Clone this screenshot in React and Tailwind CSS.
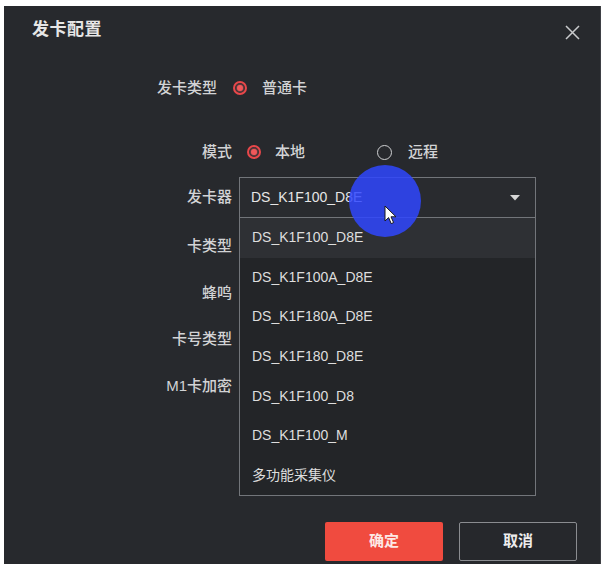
import { useState } from 'react'

const devices = [
  'DS_K1F100_D8E',
  'DS_K1F100A_D8E',
  'DS_K1F180A_D8E',
  'DS_K1F180_D8E',
  'DS_K1F100_D8',
  'DS_K1F100_M',
  '多功能采集仪'
]

const fieldRows = [
  { label: '卡类型', mt: 'mt-[16px]' },
  { label: '蜂鸣', mt: 'mt-[23px]' },
  { label: '卡号类型', mt: 'mt-[22px]' },
  { label: 'M1卡加密', mt: 'mt-[23px]' }
]

function Radio({ checked }) {
  return checked ? (
    <span className="flex h-[14px] w-[14px] shrink-0 items-center justify-center rounded-full border-2 border-[#e8474a]">
      <span className="h-[6px] w-[6px] rounded-full bg-[#f0585a] shadow-[0_0_3px_#ff6b6b]" />
    </span>
  ) : (
    <span className="block h-[15px] w-[15px] shrink-0 rounded-full border-[1.5px] border-[#cfd0d2]" />
  )
}

export default function App() {
  const [device, setDevice] = useState(devices[0])

  return (
    <div className="h-[564px] w-[604px] overflow-hidden bg-white pl-[4px] pt-[6px] font-['Liberation_Sans','Noto_Sans_CJK_SC',sans-serif]">
      <div className="relative h-full w-[597px] border-r border-[#3e4045] bg-[#27292d] text-[#d2d3d5]">
        {/* Header */}
        <div className="flex h-[50px] items-start justify-between pl-[28px] pr-[20px]">
          <span className="mt-[14px] text-[17px] font-bold leading-[20px] tracking-[0.5px] text-[#e6e6e6]">发卡配置</span>
          <svg className="mt-[19px]" width="15" height="15" viewBox="0 0 15 15">
            <path d="M1 1L14 14M14 1L1 14" stroke="#c9cacc" strokeWidth="1.5" />
          </svg>
        </div>

        {/* 发卡类型 */}
        <div className="mt-[20px] flex h-[24px] items-center text-[15px] font-medium">
          <span className="w-[213px] text-right">发卡类型</span>
          <span className="ml-[16px] flex"><Radio checked /></span>
          <span className="ml-[15px]">普通卡</span>
        </div>

        {/* 模式 */}
        <div className="mt-[40px] flex h-[24px] items-center text-[15px] font-medium">
          <span className="w-[228px] text-right">模式</span>
          <span className="ml-[15px] flex"><Radio checked /></span>
          <span className="ml-[14px]">本地</span>
          <span className="ml-[72px] flex"><Radio /></span>
          <span className="ml-[16px]">远程</span>
        </div>

        {/* 发卡器 */}
        <div className="mt-[13px] flex h-[41px] items-center text-[15px] font-medium">
          <span className="w-[228px] text-right">发卡器</span>
          <div className="ml-[7px] flex h-[41px] w-[297px] items-center justify-between border border-[#72757a] bg-[#292b2f] pl-[11px] pr-[15px]">
            <span className="text-[14px] text-[#e6e6e6]">{device}</span>
            <svg width="10" height="6" viewBox="0 0 10 6">
              <path d="M0 0H10L5 5.5Z" fill="#d6d6d6" />
            </svg>
          </div>
        </div>

        {fieldRows.map((row) => (
          <div key={row.label} className={`${row.mt} flex h-[24px] items-center text-[15px] font-medium`}>
            <span className="w-[228px] text-right">{row.label}</span>
          </div>
        ))}

        {/* Buttons */}
        <div className="mt-[124px] flex justify-end gap-[16px] pr-[23px]">
          <button className="flex h-[39px] w-[118px] items-center justify-center rounded-[2px] bg-[#f04b3f] text-[15px] font-bold text-[#fde8e6]">
            确定
          </button>
          <button className="flex h-[39px] w-[118px] items-center justify-center rounded-[2px] border border-[#8a8c90] bg-[#26282c] text-[15px] font-bold text-[#ececec]">
            取消
          </button>
        </div>

        {/* Dropdown menu */}
        <div className="absolute left-[235px] top-[212px] flex h-[278px] w-[297px] flex-col border-x border-b border-[#72757a] bg-[#232528]">
          {devices.map((d, i) => (
            <button
              key={d}
              onClick={() => setDevice(d)}
              className={`flex flex-1 items-center pl-[12px] text-left text-[14px] text-[#dedede] ${i === 0 ? 'bg-[#2e3034]' : ''}`}
            >
              {d}
            </button>
          ))}
        </div>

        {/* Pointer highlight */}
        <div className="absolute left-[345px] top-[159px] h-[72px] w-[72px] rounded-full bg-[#2f46ff]/85" />
        <svg className="absolute left-[380px] top-[199px]" width="14" height="20" viewBox="0 0 14 20">
          <path d="M1 1V16L4.6 12.6L7.2 18.6L9.6 17.6L7 11.8H12Z" fill="#ffffff" stroke="#1a1a1a" strokeWidth="1" strokeLinejoin="round" />
        </svg>
      </div>
    </div>
  )
}
